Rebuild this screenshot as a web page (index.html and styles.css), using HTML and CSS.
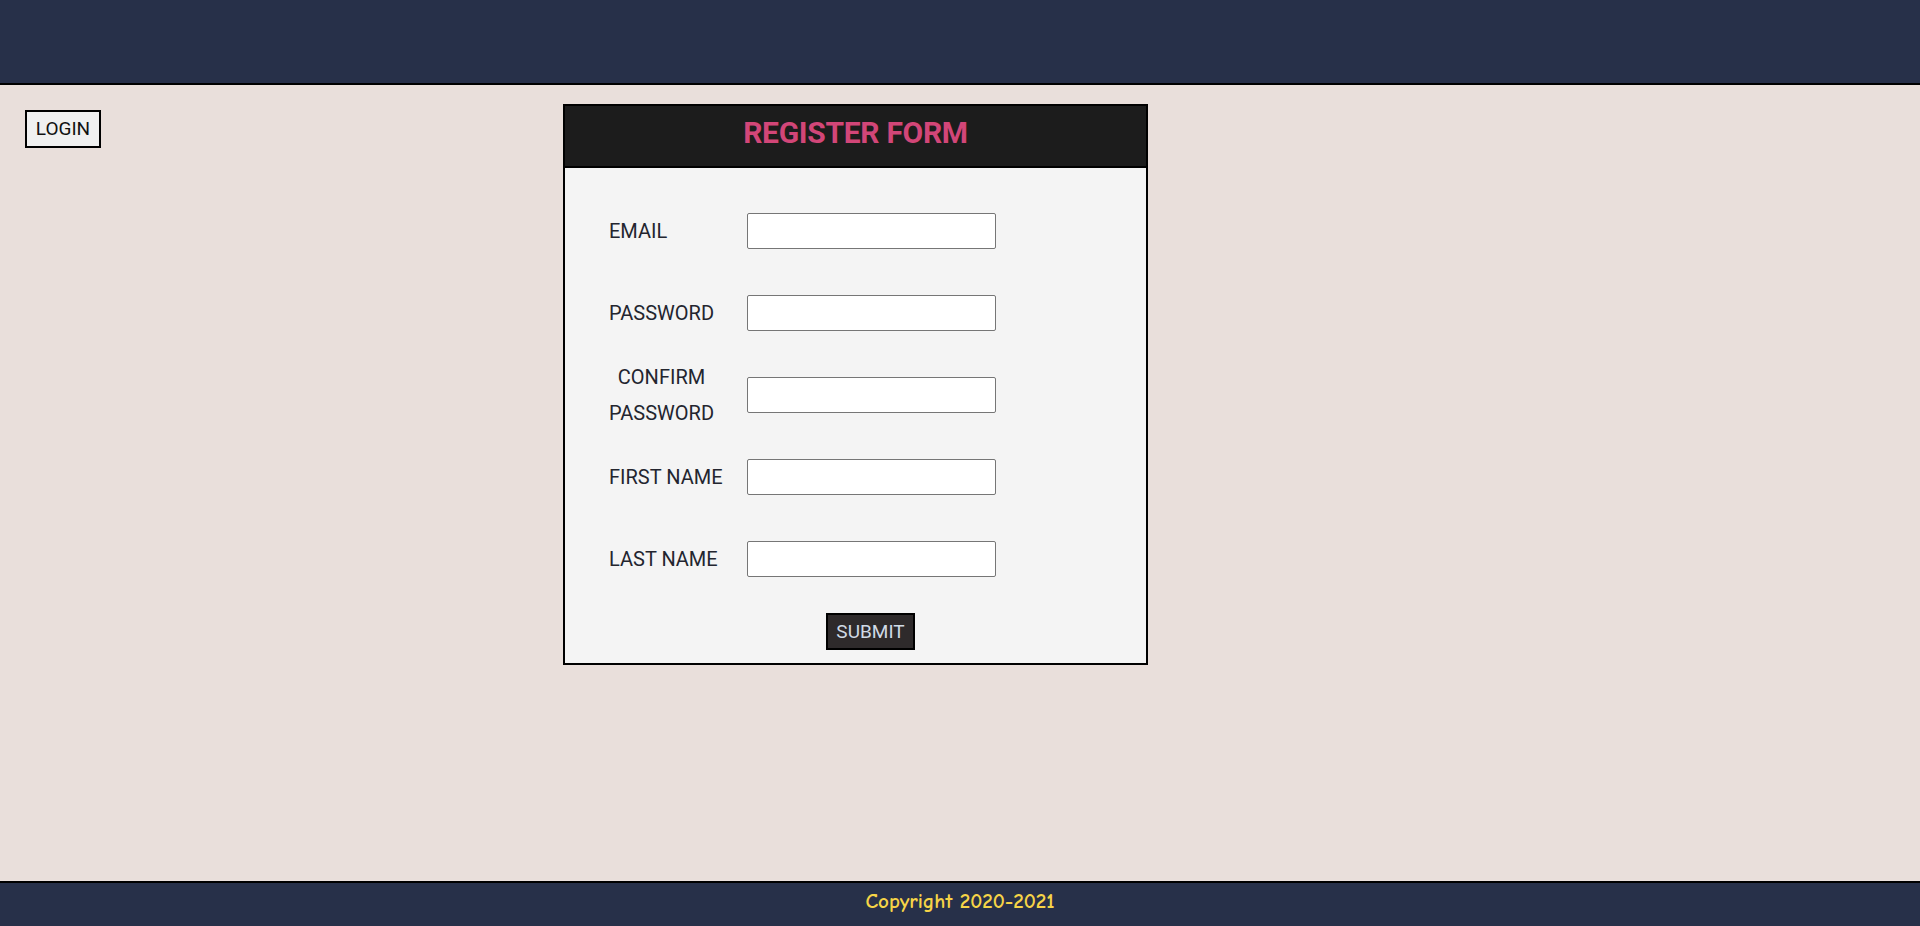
FILE: index.html
```html
<!DOCTYPE html>
<html lang="en">
<head>
<meta charset="utf-8">
<title>Register</title>
<link rel="stylesheet" href="styles.css">
</head>
<body>
  <header class="topbar"></header>

  <main class="page">
    <button class="login-btn" type="button">LOGIN</button>

    <form class="register">
      <h2 class="register-title">REGISTER FORM</h2>
      <div class="register-body">
        <div class="fields">
          <label class="field-label" for="email">EMAIL</label>
          <input class="field-input" id="email" type="email">

          <label class="field-label" for="password">PASSWORD</label>
          <input class="field-input" id="password" type="password">

          <label class="field-label" for="confirm">CONFIRM<br>PASSWORD</label>
          <input class="field-input" id="confirm" type="password">

          <label class="field-label" for="first">FIRST NAME</label>
          <input class="field-input" id="first" type="text">

          <label class="field-label" for="last">LAST NAME</label>
          <input class="field-input" id="last" type="text">
        </div>
        <button class="submit-btn" type="submit">SUBMIT</button>
      </div>
    </form>
  </main>

  <footer class="bottombar">Copyright 2020-2021</footer>
</body>
</html>
```

FILE: styles.css
```css
* {
  box-sizing: border-box;
}

html,
body {
  margin: 0;
  padding: 0;
}

body {
  background: #e9dfdb;
  font-family: Roboto, "Liberation Sans", Arial, sans-serif;
  color: #23252f;
  height: 926px;
  display: flex;
  flex-direction: column;
}

/* top navigation strip */
.topbar {
  height: 85px;
  background: #273049;
  border-bottom: 2px solid #000;
  flex: none;
}

.page {
  flex: 1;
  display: flex;
  align-items: flex-start;
  padding-left: 25px;
}

.login-btn {
  margin-top: 25px;
  width: 76px;
  height: 38px;
  padding: 0;
  background: #f0f0f0;
  border: 2px solid #000;
  border-radius: 0;
  font-family: Roboto, "Liberation Sans", sans-serif;
  font-size: 19px;
  color: #111;
  line-height: 34px;
  cursor: pointer;
}

/* register card */
.register {
  margin: 19px 0 0 462px;
  width: 585px;
  border: 2px solid #000;
  background: #f4f4f4;
}

.register-title {
  margin: 0;
  height: 62px;
  padding-bottom: 6px;
  background: #1c1c1c;
  border-bottom: 2px solid #000;
  text-align: center;
  font-size: 30px;
  font-weight: 700;
  line-height: 54px;
  color: #d24678;
  letter-spacing: -0.3px;
}

.register-body {
  display: flex;
  flex-direction: column;
  padding: 22px 0 13px 44px;
}

.fields {
  display: grid;
  grid-template-columns: 138px 249px;
  grid-auto-rows: 82px;
  align-items: center;
}

.field-label {
  justify-self: start;
  text-align: center;
  font-size: 20px;
  line-height: 36px;
  color: #23252f;
}

.field-input {
  width: 249px;
  height: 36px;
  border: 1px solid #767676;
  border-radius: 2px;
  background: #fff;
  font-family: Roboto, sans-serif;
  font-size: 16px;
  padding: 0 6px;
}

.submit-btn {
  align-self: flex-start;
  margin: 13px 0 0 217px;
  width: 89px;
  height: 37px;
  padding: 0;
  background: #2e2a2b;
  border: 2px solid #000;
  border-radius: 0;
  font-family: Roboto, "Liberation Sans", sans-serif;
  font-size: 19px;
  line-height: 33px;
  color: #d0dae6;
  cursor: pointer;
}

/* footer strip */
.bottombar {
  flex: none;
  height: 45px;
  background: #273049;
  border-top: 2px solid #000;
  text-align: center;
  line-height: 36px;
  font-family: "Comic Sans MS", "Comic Neue", cursive;
  font-size: 21px;
  font-weight: 600;
  color: #f6d447;
}
```
